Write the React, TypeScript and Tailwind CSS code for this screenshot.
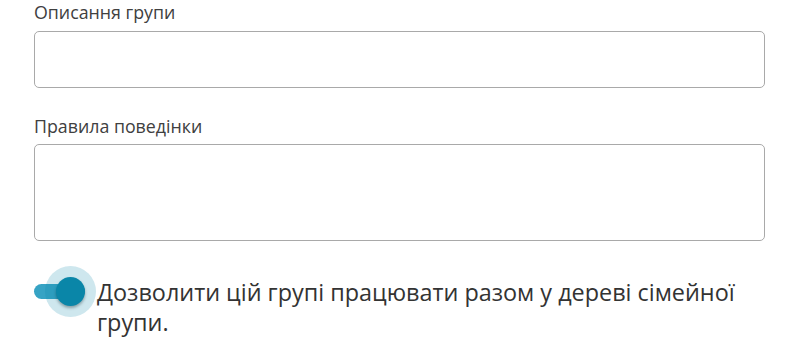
export default function App() {
  return (
    <div className="w-[800px] h-[357px] bg-white font-['Open_Sans',sans-serif] text-[#333] pl-[34px] pr-[35px]">
      <label className="block text-[17.8px] leading-[24px] text-[#404040]">Описання групи</label>
      <div className="mt-[7px] h-[57px] rounded-[5px] border border-[#a9a9a9] bg-white" />
      <label className="block mt-[26px] text-[17.8px] leading-[24px] text-[#404040]">Правила поведінки</label>
      <div className="mt-[6px] h-[97px] rounded-[5px] border border-[#a9a9a9] bg-white" />
      <div className="mt-[36px] flex items-start gap-[12px]">
        <div className="flex items-center h-[28px] shrink-0">
          <div className="w-[51px] h-[15px] rounded-full bg-[#36a3c4]" />
          <div className="ml-[-29px] w-[29px] h-[29px] rounded-full bg-[#0a86a8] shadow-[0_0_0_11px_rgba(10,135,168,0.2),0_2px_3px_rgba(0,0,0,0.35)]" />
        </div>
        <span className="text-[23.4px] leading-[30px] text-[#333]">
          Дозволити цій групі працювати разом у дереві сімейної групи.
        </span>
      </div>
    </div>
  );
}
